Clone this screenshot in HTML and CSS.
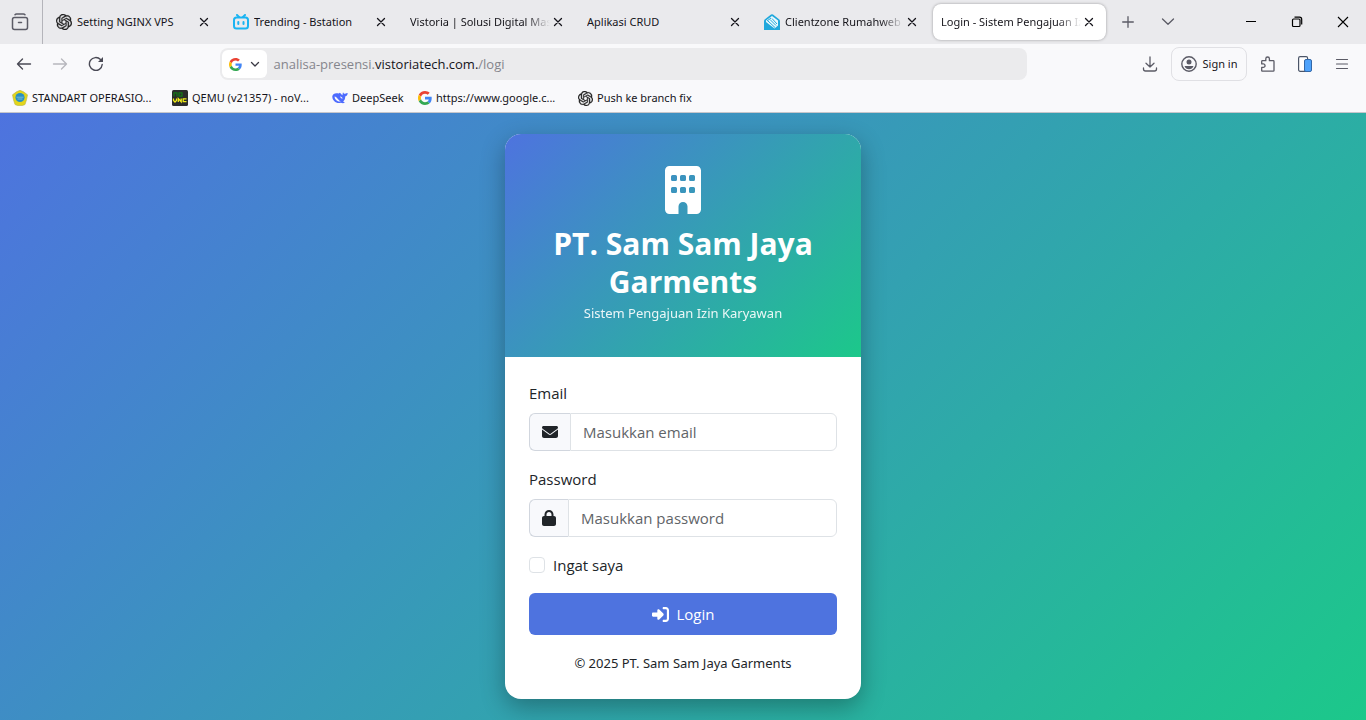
FILE: index.html
```html
<!DOCTYPE html>
<html lang="id">
<head>
<meta charset="utf-8">
<meta name="viewport" content="width=device-width, initial-scale=1">
<title>Login - Sistem Pengajuan Izin</title>
<link rel="stylesheet" href="styles.css">
</head>
<body>
<svg class="defs" aria-hidden="true">
  <symbol id="close" viewBox="0 0 16 16"><path d="M4 4l8 8M12 4l-8 8" fill="none" stroke="#15141a" stroke-width="1.5" stroke-linecap="round"/></symbol>
  <symbol id="openai" viewBox="0 0 24 24"><path d="M22.2819 9.8211a5.9847 5.9847 0 0 0-.5157-4.9108 6.0462 6.0462 0 0 0-6.5098-2.9A6.0651 6.0651 0 0 0 4.9807 4.1818a5.9847 5.9847 0 0 0-3.9977 2.9 6.0462 6.0462 0 0 0 .7427 7.0966 5.98 5.98 0 0 0 .511 4.9107 6.051 6.051 0 0 0 6.5146 2.9001A5.9847 5.9847 0 0 0 13.2599 24a6.0557 6.0557 0 0 0 5.7718-4.2058 5.9894 5.9894 0 0 0 3.9977-2.9001 6.0557 6.0557 0 0 0-.7475-7.0729zm-9.022 12.6081a4.4755 4.4755 0 0 1-2.8764-1.0408l.1419-.0804 4.7783-2.7582a.7948.7948 0 0 0 .3927-.6813v-6.7369l2.02 1.1686a.071.071 0 0 1 .038.052v5.5826a4.504 4.504 0 0 1-4.4945 4.4944zm-9.6607-4.1254a4.4708 4.4708 0 0 1-.5346-3.0137l.142.0852 4.783 2.7582a.7712.7712 0 0 0 .7806 0l5.8428-3.3685v2.3324a.0804.0804 0 0 1-.0332.0615L9.74 19.9502a4.4992 4.4992 0 0 1-6.1408-1.6464zM2.3408 7.8956a4.485 4.485 0 0 1 2.3655-1.9728V11.6a.7664.7664 0 0 0 .3879.6765l5.8144 3.3543-2.0201 1.1685a.0757.0757 0 0 1-.071 0l-4.8303-2.7865A4.504 4.504 0 0 1 2.3408 7.872zm16.5963 3.8558L13.1038 8.364 15.1192 7.2a.0757.0757 0 0 1 .071 0l4.8303 2.7913a4.4944 4.4944 0 0 1-.6765 8.1042v-5.6772a.79.79 0 0 0-.407-.667zm2.0107-3.0231l-.142-.0852-4.7735-2.7818a.7759.7759 0 0 0-.7854 0L9.409 9.2297V6.8974a.0662.0662 0 0 1 .0284-.0615l4.8303-2.7866a4.4992 4.4992 0 0 1 6.6802 4.66zM8.3065 12.863l-2.02-1.1638a.0804.0804 0 0 1-.038-.0567V6.0742a4.4992 4.4992 0 0 1 7.3757-3.4537l-.142.0805L8.704 5.459a.7948.7948 0 0 0-.3927.6813zm1.0976-2.3654l2.602-1.4998 2.6069 1.4998v2.9994l-2.5974 1.4997-2.6067-1.4997Z" fill="#222" stroke="#222" stroke-width=".5"/></symbol>
  <symbol id="google" viewBox="0 0 48 48">
    <path fill="#EA4335" d="M24 9.5c3.54 0 6.71 1.22 9.21 3.6l6.85-6.85C35.9 2.38 30.47 0 24 0 14.62 0 6.51 5.38 2.56 13.22l7.98 6.19C12.43 13.72 17.74 9.5 24 9.5z"/>
    <path fill="#4285F4" d="M46.98 24.55c0-1.57-.15-3.09-.38-4.55H24v9.02h12.94c-.58 2.96-2.26 5.48-4.78 7.18l7.73 6c4.51-4.18 7.09-10.36 7.09-17.65z"/>
    <path fill="#FBBC05" d="M10.53 28.59c-.48-1.45-.76-2.99-.76-4.59s.27-3.14.76-4.59l-7.98-6.19C.92 16.46 0 20.12 0 24s.92 7.54 2.56 10.78l7.97-6.19z"/>
    <path fill="#34A853" d="M24 48c6.48 0 11.93-2.13 15.89-5.81l-7.73-6c-2.15 1.45-4.92 2.3-8.16 2.3-6.26 0-11.57-4.22-13.47-9.91l-7.98 6.19C6.51 42.62 14.62 48 24 48z"/>
  </symbol>
</svg>

<header class="browser">
  <div class="tabstrip">
    <button class="sidebar-btn" aria-label="Tampilan tab"><svg width="18" height="18" viewBox="0 0 18 18" fill="none" stroke="#5b5b66" stroke-width="1.5" stroke-linecap="round"><path d="M4 1.7Q4.600 1 5.500 1h7q.9 0 1.500.7M7.500 9.500h3"/><rect x="1.500" y="4.500" width="15" height="12" rx="2"/></svg></button>
    <nav class="tabs">
      <div class="tab"><svg class="fav small" aria-hidden="true"><use href="#openai"/></svg><span class="tab-title">Setting NGINX VPS</span><button class="close" aria-label="Tutup"><svg width="14" height="14"><use href="#close"/></svg></button></div>
      <div class="tab"><svg class="fav" viewBox="0 0 16 16" fill="none" stroke="#1bb4f2" stroke-width="2" stroke-linecap="round"><rect x="1" y="3.500" width="14" height="11" rx="2.500"/><path d="M4 1l2 2M12 1l-2 2M5.300 8v2M10.500 8v2"/></svg><span class="tab-title">Trending - Bstation</span><button class="close" aria-label="Tutup"><svg width="14" height="14"><use href="#close"/></svg></button></div>
      <div class="tab"><span class="tab-title faded">Vistoria | Solusi Digital Mas</span><button class="close" aria-label="Tutup"><svg width="14" height="14"><use href="#close"/></svg></button></div>
      <div class="tab"><span class="tab-title">Aplikasi CRUD</span><button class="close" aria-label="Tutup"><svg width="14" height="14"><use href="#close"/></svg></button></div>
      <div class="tab"><svg class="fav" viewBox="0 0 16 16"><path d="M0 7.200Q0 6 1 5.300L7 .6q1-.8 2 0l6 4.700q1 .7 1 1.900V16H0z" fill="#20a8dc"/><path d="M2 6.500l6-4.400 6 4.400v5l-3.500 3L2 8z" fill="#e9f8fd"/><path d="M4 7l7 6.500M6 5.500l6 6M8 4.500l5 5.500M3 7l4-3" fill="none" stroke="#20a8dc" stroke-width="1"/></svg><span class="tab-title faded">Clientzone Rumahweb</span><button class="close" aria-label="Tutup"><svg width="14" height="14"><use href="#close"/></svg></button></div>
      <div class="tab active"><span class="tab-title faded">Login - Sistem Pengajuan Iz</span><button class="close" aria-label="Tutup"><svg width="14" height="14"><use href="#close"/></svg></button></div>
    </nav>
    <div class="tab-tools">
      <button class="tool" aria-label="Tab baru"><svg width="12" height="12" viewBox="0 0 12 12" stroke="#5b5b66" stroke-width="1.300" stroke-linecap="round"><path d="M6 .7v10.600M.7 6h10.600"/></svg></button>
      <button class="tool" aria-label="Daftar tab"><svg width="14" height="14" viewBox="0 0 14 14" fill="none" stroke="#5b5b66" stroke-width="1.300" stroke-linecap="round" stroke-linejoin="round"><path d="M1.500 4L7 9.300 12.500 4"/></svg></button>
    </div>
    <div class="window-tools">
      <button class="win" aria-label="Kecilkan"><svg width="12" height="12" viewBox="0 0 12 12" stroke="#000"><path d="M1 5.500h10"/></svg></button>
      <button class="win" aria-label="Pulihkan"><svg width="12" height="12" viewBox="0 0 12 12" fill="none" stroke="#000" stroke-width="1.200"><rect x="1.500" y="3" width="7.500" height="7.500" rx="1"/><path d="M3.500 1.200h5q2.200 0 2.200 2.200v5"/></svg></button>
      <button class="win" aria-label="Tutup jendela"><svg width="12" height="12" viewBox="0 0 12 12" stroke="#000" stroke-width="1.100"><path d="M1 1l10 10M11 1L1 11"/></svg></button>
    </div>
  </div>

  <div class="toolbar">
    <div class="nav-tools">
      <button class="tool" aria-label="Kembali"><svg width="16" height="16" viewBox="0 0 16 16" fill="none" stroke="#4a4a55" stroke-width="1.400" stroke-linecap="round" stroke-linejoin="round"><path d="M14.500 8H1.500M6.500 3L1.500 8l5 5"/></svg></button>
      <button class="tool" aria-label="Maju"><svg width="16" height="16" viewBox="0 0 16 16" fill="none" stroke="#b7b7bd" stroke-width="1.400" stroke-linecap="round" stroke-linejoin="round"><path d="M1.500 8h13M9.500 3l5 5-5 5"/></svg></button>
      <button class="tool" aria-label="Muat ulang"><svg width="16" height="16" viewBox="0 0 16 16" fill="none" stroke="#4a4a55" stroke-width="1.400" stroke-linecap="round"><path d="M14.200 8.500A6.400 6.400 0 1 1 12.500 3.600L14 5"/><path d="M15 1v5h-5z" fill="#4a4a55" stroke="none"/></svg></button>
    </div>
    <div class="urlbar">
      <button class="engine" aria-label="Mesin pencari"><svg width="13" height="13"><use href="#google"/></svg><svg width="10" height="10" viewBox="0 0 10 10" fill="none" stroke="#3a3944" stroke-width="1.300" stroke-linecap="round" stroke-linejoin="round"><path d="M1.500 3.500L5 7l3.500-3.500"/></svg></button>
      <div class="url">analisa-presensi.<b>vistoriatech.com.</b>/logi</div>
    </div>
    <div class="right-tools">
      <button class="tool" aria-label="Unduhan"><svg width="16" height="16" viewBox="0 0 16 16" fill="none" stroke="#5b5b66" stroke-width="1.300" stroke-linecap="round" stroke-linejoin="round"><path d="M8 1v10M4 7.300L8 11l4-3.700M1.500 12v1q0 2 2 2h9q2 0 2-2v-1"/></svg></button>
      <button class="signin"><svg width="16" height="16" viewBox="0 0 16 16"><circle cx="8" cy="8" r="7.200" fill="none" stroke="#5b5b66" stroke-width="1.400"/><circle cx="8" cy="6" r="2.500" fill="#5b5b66"/><path d="M3.500 10h9q-1.200 3.200-4.500 3.200T3.500 10z" fill="#5b5b66"/></svg>Sign in</button>
      <button class="tool" aria-label="Ekstensi"><svg width="16" height="16" viewBox="0 0 16 16" fill="none" stroke="#5b5b66" stroke-width="1.300" stroke-linejoin="round"><path d="M2.500 15.200q-.8 0-.8-.8v-3h1.600a1.700 1.700 0 0 0 0-3.500H1.700V5.500q0-.8.8-.8h3.300V2.800a1.800 1.800 0 0 1 3.600 0v1.900h3.800q.8 0 .8.8v8.900q0 .8-.8.8z"/></svg></button>
      <button class="tool" aria-label="Tampilan ponsel"><svg width="16" height="16" viewBox="0 0 16 16"><rect x="1.600" y=".7" width="9" height="14.600" rx="1.500" fill="#fff" stroke="#4b5568" stroke-width="1.200"/><rect x="7.500" y="3.500" width="7" height="12" rx="1.500" fill="#4fa3fb" stroke="#3368a8"/></svg></button>
      <button class="tool" aria-label="Menu"><svg width="14" height="12" viewBox="0 0 14 12" stroke="#5b5b66" stroke-width="1.200" stroke-linecap="round"><path d="M1.500 1.500h11M1.500 6h11M1.500 10.500h11"/></svg></button>
    </div>
  </div>

  <nav class="bookmarks">
    <a class="bookmark" href="#"><svg width="16" height="16" viewBox="0 0 16 16"><path d="M8 .3l3.500 1.500 4 3-1 5L13 14.500l-2.500 1h-5l-2.500-1L1.500 9.800l-1-5 4-3z" fill="#e3d51b" stroke="#b5b544" stroke-width=".6"/><circle cx="8" cy="7.500" r="4.600" fill="#2790c3"/><path d="M4.500 7.200h7M5.500 9h5" stroke="#76bad5"/></svg>STANDART OPERASIO...</a>
    <a class="bookmark" href="#"><svg width="16" height="16" viewBox="0 0 16 16"><rect width="16" height="16" rx="1.500" fill="#2b2b2b"/><path d="M2 6.500V2.800h3v3.700M7 2.800h3v3.400H7z" fill="none" stroke="#147a16" stroke-width="1.200"/><path d="M1.500 8.500v2L3 12l1.500-1.500v-2M6.300 12V8.600l2.900 3.200V8.500M14.500 8.800h-3.300v2.900h3.300" fill="none" stroke="#f1ee16" stroke-width="1.300"/></svg>QEMU (v21357) - noV...</a>
    <a class="bookmark short" href="#"><svg width="16" height="16" viewBox="0 0 16 16" fill="#4d6bfe"><path d="M.3 6.200C.8 3.500 3.800 2.600 6.800 3.600l1-.8c.7.700 1.700 1.300 2.400 2.400.7-.2.200-2.300.9-3 .5 1.400 1.200 1.600 2 1.500.8-.3 1.700-.6 2.600-.7-.2 2.100-1.100 3.100-2.500 3.500.1 2.100-.7 3.900-2.100 5.100l1.800 1c-1.500.9-2.900.5-4 .2C4.500 14.200.1 10.500.3 6.200z"/><path d="M2.600 6.600c2.600.1 3.600 4.300 6.200 4.700-1.500 1-6.300-.6-6.200-4.700zM8 6.500c1.200-.2 2.500.9 2.500 2.200C9.400 8.500 8.300 7.700 8 6.500z" fill="#f9f9fb"/></svg>DeepSeek</a>
    <a class="bookmark" href="#"><svg width="14" height="14"><use href="#google"/></svg>https://www.google.c...</a>
    <a class="bookmark" href="#"><svg width="15" height="15"><use href="#openai"/></svg>Push ke branch fix</a>
  </nav>
</header>

<main class="page">
  <section class="card">
    <div class="card-head">
      <svg class="building" viewBox="0 0 384 512" fill="#fff" fill-rule="evenodd" aria-hidden="true"><path d="M48 0C21.500 0 0 21.500 0 48V464c0 26.500 21.500 48 48 48h96V432c0-26.500 21.500-48 48-48s48 21.500 48 48v80h96c26.500 0 48-21.500 48-48V48c0-26.500-21.500-48-48-48H48zM80 96h32q16 0 16 16v32q0 16-16 16H80q-16 0-16-16v-32q0-16 16-16zM176 96h32q16 0 16 16v32q0 16-16 16h-32q-16 0-16-16v-32q0-16 16-16zM272 96h32q16 0 16 16v32q0 16-16 16h-32q-16 0-16-16v-32q0-16 16-16zM80 224h32q16 0 16 16v32q0 16-16 16H80q-16 0-16-16v-32q0-16 16-16zM176 224h32q16 0 16 16v32q0 16-16 16h-32q-16 0-16-16v-32q0-16 16-16zM272 224h32q16 0 16 16v32q0 16-16 16h-32q-16 0-16-16v-32q0-16 16-16z"/></svg>
      <h1 class="title">PT. Sam Sam Jaya Garments</h1>
      <p class="subtitle">Sistem Pengajuan Izin Karyawan</p>
    </div>
    <form class="card-body">
      <div class="field">
        <label for="email">Email</label>
        <div class="input-group">
          <span class="addon"><svg width="16" height="16" viewBox="0 0 512 512" fill="#212529"><path d="M48 64C21.500 64 0 85.500 0 112c0 15.100 7.100 29.300 19.200 38.400L236.800 313.600c11.400 8.500 27 8.500 38.400 0L492.800 150.400c12.100-9.100 19.200-23.300 19.200-38.400c0-26.500-21.500-48-48-48H48zM0 176V384c0 35.300 28.700 64 64 64H448c35.300 0 64-28.700 64-64V176L294.400 339.200c-22.800 17.100-54 17.100-76.800 0L0 176z"/></svg></span>
          <input id="email" type="email" placeholder="Masukkan email">
        </div>
      </div>
      <div class="field">
        <label for="password">Password</label>
        <div class="input-group">
          <span class="addon"><svg width="14" height="16" viewBox="0 0 448 512" fill="#212529"><path d="M144 144v48H304V144c0-44.200-35.800-80-80-80s-80 35.800-80 80zM80 192V144C80 64.500 144.500 0 224 0s144 64.500 144 144v48h16c35.300 0 64 28.700 64 64V448c0 35.300-28.700 64-64 64H64c-35.300 0-64-28.700-64-64V256c0-35.300 28.700-64 64-64H80z"/></svg></span>
          <input id="password" type="password" placeholder="Masukkan password">
        </div>
      </div>
      <div class="check">
        <input id="remember" type="checkbox">
        <label for="remember">Ingat saya</label>
      </div>
      <button class="login" type="submit"><svg width="17" height="17" viewBox="0 0 512 512" fill="#fff"><path d="M217.900 105.900L340.700 228.700c7.200 7.200 11.300 17.100 11.300 27.300s-4.100 20.100-11.300 27.300L217.900 406.100c-6.400 6.400-15 9.900-24 9.900c-18.700 0-33.900-15.200-33.900-33.900l0-62.100L32 320c-17.700 0-32-14.300-32-32l0-64c0-17.700 14.300-32 32-32l128 0 0-62.100c0-18.700 15.200-33.900 33.900-33.900c9 0 17.600 3.600 24 9.900zM352 416l64 0c17.700 0 32-14.300 32-32l0-256c0-17.700-14.300-32-32-32l-64 0c-17.700 0-32-14.300-32-32s14.300-32 32-32l64 0c53 0 96 43 96 96l0 256c0 53-43 96-96 96l-64 0c-17.700 0-32-14.300-32-32s14.300-32 32-32z"/></svg>Login</button>
      <p class="copyright">© 2025 PT. Sam Sam Jaya Garments</p>
    </form>
  </section>
</main>
</body>
</html>
```
FILE: styles.css
```css
* { box-sizing: border-box; }
body {
  margin: 0;
  min-height: 100vh;
  display: flex;
  flex-direction: column;
  font-family: "Segoe UI", "Open Sans", "Noto Sans", sans-serif;
  font-size: 15px;
  line-height: 24px;
  color: #212529;
}
button, input { font: inherit; color: inherit; }
button { border: 0; background: none; padding: 0; }
h1, p { margin: 0; }
svg { display: block; flex: none; }
.defs { position: absolute; width: 0; height: 0; }

/* browser frame */
.browser {
  font-family: "Segoe UI", "Noto Sans", sans-serif;
  font-size: 11px;
  line-height: 16px;
  color: #15141a;
  background: #f9f9fb;
  border-bottom: 1px solid #c6c6cb;
}
.tabstrip {
  display: flex;
  align-items: center;
  height: 44px;
  background: #eaeaed;
}
.sidebar-btn {
  display: grid;
  place-items: center;
  width: 43px;
  height: 44px;
  padding-right: 2px;
  border-right: 1px solid #b4b4ba;
}
.tabs {
  display: flex;
  gap: 4px;
  flex: 0 1 1058px;
  min-width: 0;
  margin-left: 5px;
}
.tab {
  display: flex;
  align-items: center;
  flex: 1 1 0;
  min-width: 0;
  height: 36px;
  padding: 0 9px 0 8px;
  border-radius: 8px;
}
.tab.active {
  background: #fff;
  box-shadow: 0 0 3px rgba(0, 0, 0, .35);
}
.fav { width: 16px; height: 16px; margin-right: 5px; }
.tab-title {
  flex: 1;
  min-width: 0;
  overflow: hidden;
  white-space: nowrap;
}
.tab-title.faded { mask-image: linear-gradient(to left, transparent, #000 24px); }
.close { display: grid; place-items: center; width: 16px; height: 16px; }
.tool { display: grid; place-items: center; width: 32px; height: 32px; }
.tab-tools { display: flex; gap: 8px; margin-left: 6px; }
.window-tools { display: flex; margin-left: auto; }
.win { display: grid; place-items: center; width: 46px; height: 44px; }

.toolbar {
  display: flex;
  align-items: center;
  height: 40px;
  padding: 0 8px;
}
.nav-tools { display: flex; gap: 4px; }
.urlbar {
  display: flex;
  align-items: center;
  flex: 0 1 807px;
  height: 32px;
  margin: 0 auto;
  padding: 2px;
  border-radius: 8px;
  background: #ebebed;
}
.engine {
  display: flex;
  align-items: center;
  justify-content: center;
  gap: 8px;
  width: 45px;
  height: 28px;
  border-radius: 6px;
  background: #fff;
}
.url {
  margin-left: 7px;
  font-family: "Segoe UI", "Open Sans", sans-serif;
  font-size: 13px;
  color: #85858c;
}
.url b { font-weight: 400; color: #15141a; }
.right-tools { display: flex; align-items: center; gap: 5px; }
.signin {
  display: flex;
  align-items: center;
  justify-content: center;
  gap: 6px;
  width: 76px;
  height: 34px;
  border: 1px solid #e0e0e4;
  border-radius: 8px;
}

.bookmarks {
  display: flex;
  align-items: center;
  height: 28px;
  padding-left: 12px;
}
.bookmark {
  display: flex;
  align-items: center;
  gap: 4px;
  width: 160px;
  color: inherit;
  text-decoration: none;
  white-space: nowrap;
}
.bookmark.short { width: 86px; }

/* login page */
.page {
  flex: 1;
  display: flex;
  align-items: center;
  justify-content: center;
  padding: 21px 12px;
  background: linear-gradient(135deg, #4e73df, #1cc88a);
}
.card {
  width: 100%;
  max-width: 356px;
  border-radius: 16px;
  overflow: hidden;
  background: #fff;
  box-shadow: 0 8px 25px rgba(0, 0, 0, .3);
}
.card-head {
  display: flex;
  flex-direction: column;
  align-items: center;
  padding: 32px;
  text-align: center;
  color: #fff;
  background: linear-gradient(135deg, #4e73df, #1cc88a);
}
.building { width: 36px; height: 48px; margin-bottom: 11px; }
.title { font-size: 30px; line-height: 38px; font-weight: 700; }
.subtitle, .copyright {
  font-family: "Segoe UI", "Noto Sans", sans-serif;
  font-size: 13px;
  line-height: 24px;
}
.subtitle { opacity: .9; }
.copyright { text-align: center; }
.card-body {
  display: flex;
  flex-direction: column;
  gap: 16px;
  padding: 24px;
}
.field { display: flex; flex-direction: column; gap: 8px; }
.input-group { display: flex; height: 38px; }
.addon {
  display: flex;
  align-items: center;
  padding: 0 12px;
  background: #f8f9fc;
  border: 1px solid #d1d6de;
  border-right: 0;
  border-radius: 6px 0 0 6px;
}
.input-group input {
  flex: 1;
  min-width: 0;
  padding: 0 12px;
  border: 1px solid #dee2e6;
  border-radius: 0 6px 6px 0;
  outline: 0;
  background: #fff;
}
.input-group input::placeholder { color: #5f6468; opacity: 1; }
.check { display: flex; align-items: center; gap: 8px; }
.check input {
  appearance: none;
  width: 16px;
  height: 16px;
  margin: 0;
  border: 1px solid #dee2e6;
  border-radius: 4px;
  background: #fff;
}
.login {
  display: flex;
  align-items: center;
  justify-content: center;
  gap: 8px;
  height: 42px;
  border-radius: 6px;
  color: #fff;
  background: #4e73df;
}
```
